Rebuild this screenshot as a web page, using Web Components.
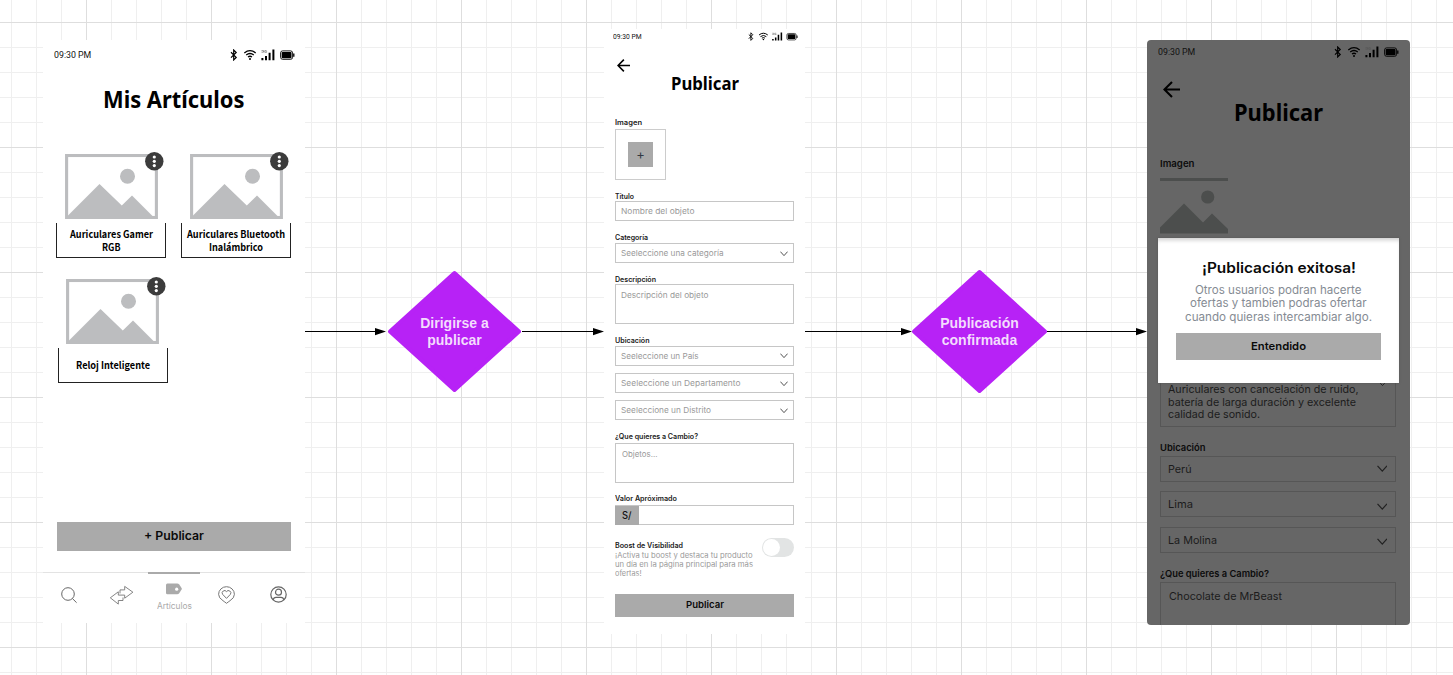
<!DOCTYPE html>
<html lang="es">
<head>
<meta charset="utf-8">
<title>Flujo de publicación</title>
<style>
html,body{margin:0;height:100%;overflow:hidden;background:#fff}
body{font-family:Inter,"Liberation Sans",sans-serif}
</style>
</head>
<body>
<flow-canvas>
  <articles-screen style="left:43px;top:40px"></articles-screen>
  <flow-arrow len="81" style="left:305px;top:326px"></flow-arrow>
  <decision-node w="135" h="123" style="left:387px;top:270px"><span>Dirigirse a<br>publicar</span></decision-node>
  <flow-arrow len="82" style="left:522px;top:326px"></flow-arrow>
  <publish-screen style="left:604px;top:29px"></publish-screen>
  <flow-arrow len="107" style="left:805px;top:326px"></flow-arrow>
  <decision-node w="137" h="125" style="left:911px;top:269px"><span>Publicación<br>confirmada</span></decision-node>
  <flow-arrow len="100" style="left:1047px;top:326px"></flow-arrow>
  <success-screen style="left:1147px;top:40px"></success-screen>
</flow-canvas>

<script>
function define(name, render, after) {
  customElements.define(name, class extends HTMLElement {
    connectedCallback() {
      if (this.shadowRoot) return;
      const t = document.createElement('template');
      t.innerHTML = render(this);
      this.attachShadow({mode: 'open'}).append(t.content.cloneNode(true));
      if (after) after(this);
    }
  });
}
const a = (el, n, d = '') => el.getAttribute(n) ?? d;

define('flow-canvas', () => `<style>
:host{display:block;position:relative;width:1453px;height:675px;overflow:hidden;
background:
linear-gradient(90deg,#dedede 1px,transparent 1px) 86px 0/125px 125px,
linear-gradient(#dedede 1px,transparent 1px) 0 22px/125px 125px,
linear-gradient(90deg,#efefef 1px,transparent 1px) 11px 0/25px 25px,
linear-gradient(#efefef 1px,transparent 1px) 0 22px/25px 25px,#fff}
::slotted(*){position:absolute}
</style><slot></slot>`);

define('flow-arrow', el => { const n = +a(el, 'len'); return `<style>:host{display:block;width:${n}px;height:11px}svg{display:block}</style>
<svg width="${n}" height="11"><path d="M0 5.5H${n-9}" stroke="#000" stroke-width="1.2"/><path d="M${n-11} 2L${n} 5.6L${n-11} 9.2Z"/></svg>`; });

define('decision-node', el => { const w = +a(el,'w'), h = +a(el,'h'); return `<style>
:host{display:grid;width:${w}px;height:${h}px;place-items:center;text-align:center;color:#f3dcfd;font:bold 14px/16.7px "Liberation Sans",Arial,sans-serif}
svg,.t{grid-area:1/1}</style>
<svg width="${w}" height="${h}"><path d="M${w/2} 3L${w-3} ${h/2}L${w/2} ${h-3}L3 ${h/2}Z" fill="#b722f6" stroke="#b722f6" stroke-width="4" stroke-linejoin="round"/></svg><div class="t"><slot></slot></div>`; });

define('status-bar', () => `<style>
:host{display:flex;align-items:center;justify-content:space-between;box-sizing:border-box;color:#111;font-family:Roboto,sans-serif}
svg{display:block;width:var(--iw,65px)}
</style><slot></slot>
<svg viewBox="0 0 65 12" fill="none" stroke="#000">
<path d="M1 3.3L6.2 8.4L3.7 10.9V1L6.2 3.5L1 8.7" stroke-width="1.2"/>
<path d="M14.3 3.9Q20 -.7 25.7 3.9M16.2 6Q20 3 23.8 6M18 8Q20 6.5 22 8" stroke-width="1.3"/><circle cx="20" cy="9.9" r="1" fill="#000" stroke="none"/>
<path d="M32.4 9v2.2M36 7v4.2M39.6 3.7v7.5M43.4 .6v10.6" stroke-width="2"/>
<path d="M31.5 1.6h2v1.6h-2M34.8 1.6h1.8M34.8 1.6v1.7h1.8v-1" stroke="#555" stroke-width=".6"/>
<rect x="50.6" y="1.9" width="12" height="8.4" rx="2" stroke-width=".9"/><rect x="51.7" y="3" width="9.8" height="6.2" rx=".8" fill="#000" stroke="none"/><path d="M63.8 4.6v3.2" stroke-width="1.3"/>
</svg>`);

define('back-arrow', () => `<style>:host{display:block;width:var(--s);height:var(--s)}svg{display:block;width:100%;height:100%}</style>
<svg viewBox="0 0 17 17" fill="none" stroke="#000" stroke-width="2.1"><path d="M17 8.5H1.6M9 .9L1.4 8.5L9 16.1"/></svg>`);

define('picture-thumb', () => `<style>:host{display:block;width:93px;height:65px}svg{display:block}</style>
<svg width="93" height="65"><rect x="1.6" y="1.5" width="89.8" height="62" fill="#fff" stroke="#bcbdbf" stroke-width="3.1"/>
<circle cx="62.5" cy="22.2" r="7.5" fill="#bcbdbf"/><path d="M2 62.5L34.5 30L56.8 51.5L67 41.5L88 62.5V64H2Z" fill="#bcbdbf"/></svg>`);

define('item-card', el => `<style>
:host{display:flex;flex-direction:column;width:110px}
.p{position:relative;margin-left:8.6px}
.m{position:absolute;left:80.4px;top:-2px;display:block}
.b{box-sizing:border-box;height:35px;margin-top:4px;padding-bottom:1px;border:1px solid #222;border-top:0;display:flex;flex-direction:column;justify-content:center;align-items:center;font:bold 10px/13px "Noto Sans CJK SC","Noto Sans",sans-serif;color:#000}
</style><div class="p"><picture-thumb></picture-thumb>
<svg class="m" width="19" height="19"><circle cx="9.3" cy="9.3" r="9.2" fill="#3c3c3c"/><g fill="#fff"><circle cx="9.3" cy="5" r="1.6"/><circle cx="9.3" cy="9.3" r="1.6"/><circle cx="9.3" cy="13.6" r="1.6"/></g></svg></div>
<div class="b"><slot></slot></div>`);

define('nav-item', el => `<style>
:host{display:flex;flex-direction:column;align-items:center;box-sizing:border-box;width:52.5px;height:51px;padding-top:14.4px;border-top:0 solid #aaa;color:#aaa;font-size:8.6px}
:host([on]){border-top-width:2.5px;padding-top:8.5px}svg{display:block;overflow:visible}
</style>${{
search:'<svg width="18" height="18" fill="none" stroke="#666" stroke-width="1"><circle cx="8" cy="8" r="6.3"/><path d="M12.4 12.5L16.6 16.7"/></svg>',
swap:'<svg width="24" height="19" fill="none" stroke="#777" stroke-width=".9" stroke-linejoin="round"><path d="M10 7.4V3.9H14.7V.4L22.9 6.2L14.7 12.2V9.1H8.3V5.8L.3 11.8L8.3 18.1V14.5H13V11.5"/></svg>',
tag:'<svg width="16" height="12"><path d="M1.4 .5H11.2Q12.4 .5 13.2 1.6L15.6 5Q16 5.8 15.6 6.6L13.2 10.2Q12.4 11.3 11.2 11.3H1.4Q0 11.3 0 9.8V2Q0 .5 1.4 .5Z" fill="#aaa"/><circle cx="10.7" cy="6.2" r="1.6" fill="#fff"/></svg>',
heart:'<svg width="17" height="18" fill="none" stroke="#777"><path d="M8.5 17.3Q6.8 16 5 14.7Q.6 12 .6 8.3A7.9 7.6 0 0 1 16.4 8.3Q16.4 12 12 14.7Q10.2 16 8.5 17.3Z"/><path d="M8.5 12.4L4.6 8.3A2.3 2.3 0 0 1 8.5 5.6A2.3 2.3 0 0 1 12.4 8.3Z"/></svg>',
user:'<svg width="17" height="17" fill="none" stroke="#666" stroke-width="1.2"><circle cx="8.5" cy="8.5" r="7.7"/><circle cx="8.5" cy="6.2" r="3"/><path d="M3.2 13.8Q3.6 11.4 6 11.4H11Q13.4 11.4 13.8 13.8"/></svg>'
}[a(el,'icon')]}<slot></slot>`);

define('app-button', () => `<style>:host{display:flex;box-sizing:border-box;align-items:center;justify-content:center;padding-bottom:1.5px;background:#aaa;color:#0a0a0a;font-weight:600}</style><slot></slot>`);

define('form-field', el => { const h = a(el,'h','20'); return `<style>
:host{display:block;margin-top:${a(el,'mt','0')}px}
.l{font-size:var(--ls);font-weight:600;line-height:var(--lh);height:var(--lh);color:var(--lc);margin-bottom:${a(el,'gap','0')}px}
.l fit-text{position:relative;top:var(--ly,0)}
.b{box-sizing:border-box;height:${h}px;border:1px solid var(--bc);display:flex;justify-content:space-between;align-items:flex-start;padding:0 var(--pr) 0 ${a(el,'pl','4.7')}px;font-size:var(--vs);color:var(--vc)}
.v{line-height:${a(el,'vh','18')}px}
svg{display:block;width:var(--cw);margin-top:${a(el,'cy','7')}px}
</style>${el.hasAttribute('label') ? `<div class="l"><fit-text w="${a(el,'lw')}">${a(el,'label')}</fit-text></div>` : ''}
<div class="b"><div class="v">${el.hasAttribute('value') ? `<fit-text w="${a(el,'vw')}">${a(el,'value')}</fit-text>` : '<slot></slot>'}</div>
${el.hasAttribute('select') ? '<svg viewBox="0 0 10 7" fill="none" stroke="currentColor" stroke-width="1.15"><path d="M.5 .8L5 5.8L9.5 .8" style="stroke:var(--cc)"/></svg>' : ''}</div>`; });

define('articles-screen', () => `<style>
:host{display:flex;flex-direction:column;width:262px;height:583px;background:#fff}
status-bar{height:29px;padding:0 10px 0 11.3px;font-size:9px}
h1{margin:15px 0 0;height:31px;align-self:center;font:bold 22.4px/32px "Noto Sans",sans-serif}
.g{display:grid;grid-template-columns:110px 110px;gap:21px 14.6px;padding:39px 0 0 13.4px;justify-content:start}
.g :nth-child(3){margin-left:1.4px}
app-button{height:29px;margin:139px 14px 0;font-size:11.8px}
nav{display:flex;justify-content:center;margin-top:21px;border-top:1px solid #e3e3e3}
nav>*{margin-top:-1px}
</style>
<status-bar><fit-text w="37.3">09:30 PM</fit-text></status-bar>
<h1><fit-text w="141.5">Mis Artículos</fit-text></h1>
<div class="g">
<item-card><fit-text w="83">Auriculares Gamer</fit-text><fit-text w="18.5">RGB</fit-text></item-card>
<item-card><fit-text w="98">Auriculares Bluetooth</fit-text><fit-text w="54">Inalámbrico</fit-text></item-card>
<item-card><fit-text w="74">Reloj Inteligente</fit-text></item-card>
</div>
<app-button><fit-text w="60">+ Publicar</fit-text></app-button>
<nav><nav-item icon="search"></nav-item><nav-item icon="swap"></nav-item><nav-item icon="tag" on><fit-text w="35" style="line-height:12px;margin-top:5.5px">Artículos</fit-text></nav-item><nav-item icon="heart"></nav-item><nav-item icon="user"></nav-item></nav>`);

define('publish-screen', () => `<style>
:host{display:flex;flex-direction:column;box-sizing:border-box;width:201px;height:605px;padding:0 11px;background:#fff;
--ls:7.1px;--lh:10px;--ly:1px;--lc:#1a1a1a;--bc:#c6c6c6;--vs:8px;--vc:#999;--pr:5px;--cw:8px;--cc:#444}
status-bar{--iw:50px;height:15px;margin:0 -4px 0 -2px;font-size:7px}
back-arrow{--s:13px;margin:15px 0 0 1.5px}
h1{margin:0;height:24px;align-self:center;font:bold 17.3px/24px "Noto Sans",sans-serif}
.l{font-size:7.1px;font-weight:600;line-height:10px;color:#1a1a1a}
.im{box-sizing:border-box;width:51px;height:51px;border:1px solid #ccc;margin-top:1px;display:grid;place-items:center}
.im span{width:25px;height:25px;background:#aaa;color:#333a44;display:grid;place-items:center;font-size:13px;line-height:23px}
.pre{margin:0 0 0 -5.7px;width:23.5px;height:19px;background:#aaa;color:#111;font-size:10px;font-weight:500;display:grid;place-items:center}
.bo{display:flex;justify-content:space-between;margin-top:15.5px;height:54px}
.bo p{margin:0;font-size:7.4px;line-height:9.2px;color:#999}
.tg{width:32px;height:19px;margin-top:-2.6px;border-radius:10px;background:#e2e4e4;display:flex;align-items:center;padding-left:1px;box-sizing:border-box}
.tg i{width:17px;height:17px;border-radius:50%;background:#fff}
app-button{height:22.5px;margin-top:-.5px;font-size:9.3px;padding-bottom:1px}
</style>
<status-bar><fit-text w="28.5">09:30 PM</fit-text></status-bar>
<back-arrow></back-arrow>
<h1><fit-text w="68">Publicar</fit-text></h1>
<div class="l" style="margin-top:22px"><fit-text w="27">Imagen</fit-text></div>
<div class="im"><span>+</span></div>
<form-field mt="11" label="Título" lw="19" value="Nombre del objeto" vw="73.5"></form-field>
<form-field mt="11" gap="1" label="Categoría" lw="33" value="Seeleccione una categoría" vw="102.5" select></form-field>
<form-field mt="11" label="Descripción" lw="41" value="Descripción del objeto" vw="87.5" h="40" vh="20"></form-field>
<form-field mt="11" gap="1" label="Ubicación" lw="34.5" value="Seeleccione un País" vw="77.5" select cy="5.5"></form-field>
<form-field mt="7" value="Seeleccione un Departamento" vw="119.5" select></form-field>
<form-field mt="7" value="Seeleccione un Distrito" vw="90" select></form-field>
<form-field mt="11" gap="2" label="¿Que quieres a Cambio?" lw="83" value="Objetos..." vw="35.5" h="40" vh="20" pl="5.7"></form-field>
<form-field mt="10.5" gap="1" label="Valor Apróximado" lw="62" h="20.5" style="--ly:0"><div class="pre"><fit-text w="9.5">S/</fit-text></div></form-field>
<div class="bo"><div><div class="l"><fit-text w="68">Boost de Visibilidad</fit-text></div>
<p><fit-text w="137.5">¡Activa tu boost y destaca tu producto</fit-text><fit-text w="138">un día en la página principal para más</fit-text><fit-text w="26.5">ofertas!</fit-text></p></div><div class="tg"><i></i></div></div>
<app-button><fit-text w="38">Publicar</fit-text></app-button>`);

define('success-dialog', () => `<style>
:host{display:flex;flex-direction:column;align-items:center;box-sizing:border-box;background:#fff;padding-top:20px;box-shadow:inset 0 4px 4px -2px #ccc,0 0 2px #555}
h2{margin:0;font-size:14.4px;line-height:20px;font-weight:600;color:#0a0a0a}
p{margin:5.5px 0 0;display:flex;flex-direction:column;align-items:center;font-size:11.5px;line-height:13.5px;color:#858b93}
app-button{width:205px;height:27px;margin-top:9px;font-size:11px;padding-bottom:2px}
</style><h2><fit-text w="154">¡Publicación exitosa!</fit-text></h2>
<p><fit-text w="166.5">Otros usuarios podran hacerte</fit-text><fit-text w="176.5">ofertas y tambien podras ofertar</fit-text><fit-text w="187">cuando quieras intercambiar algo.</fit-text></p>
<app-button><fit-text w="55">Entendido</fit-text></app-button>`);

define('success-screen', () => `<style>
:host{display:flex;flex-direction:column;box-sizing:border-box;width:263px;height:585px;padding:0 14.5px 0 13.4px;background:#666;border-radius:4px;overflow:hidden;
--ls:9.3px;--lh:12px;--lc:#0c0c0c;--bc:#565656;--vs:10.9px;--vc:#1c1c1c;--pr:7.5px;--cw:10.5px;--cc:#222}
status-bar{height:23px;margin:0 -3.5px 0 -2px;font-size:9px;flex:none}
back-arrow{--s:17px;margin:18px 0 0 2.5px;flex:none}
h1{margin:-1px 0 0 1px;height:32px;flex:none;align-self:center;font:bold 22.6px/32px "Noto Sans",sans-serif}
.l{font-size:9.3px;font-weight:600;line-height:12px;color:#0c0c0c;margin-top:29px}
.pic{display:block;margin-top:8px;flex:none}
.de{position:relative;margin-top:132px;flex:none}
.de svg{position:absolute;right:8px;top:13.5px}
form-field{flex:none}
success-dialog{position:absolute;left:11px;top:198px;width:241px;height:144.5px}
</style>
<status-bar><fit-text w="37.3">09:30 PM</fit-text></status-bar>
<back-arrow></back-arrow>
<h1><fit-text w="89">Publicar</fit-text></h1>
<div class="l"><fit-text w="34.5">Imagen</fit-text></div>
<svg class="pic" width="68" height="56" fill="#4c4e4d"><rect width="68" height="3"/><circle cx="47.7" cy="19" r="6.6"/><path d="M0 49.5L24 25.5L43 44.5L52 35.5L68 51V55.5H0Z"/></svg>
<div class="de"><form-field h="61" pl="6.5" vh="12.5"><div style="padding-top:16px"><fit-text w="190.5">Auriculares con cancelación de ruido,</fit-text><fit-text w="188">batería de larga duración y excelente</fit-text><fit-text w="92">calidad de sonido.</fit-text></div></form-field>
<svg width="11" height="7" fill="none" stroke="#222"><path d="M.7 .5L5.5 5.5L10.3 .5"/></svg></div>
<form-field mt="15" gap="2" label="Ubicación" lw="45.5" value="Perú" vw="23.5" h="26" vh="24" pl="7" select cy="8"></form-field>
<form-field mt="9" value="Lima" vw="25" h="26" vh="25" pl="7" select cy="10.5"></form-field>
<form-field mt="10" value="La Molina" vw="49" h="26" vh="25" pl="7" select cy="10"></form-field>
<form-field mt="15" gap="2" label="¿Que quieres a Cambio?" lw="109" value="Chocolate de MrBeast" vw="113" h="60" vh="26.5" pl="7.8"></form-field>
<success-dialog></success-dialog>`);

// One line of text, stretched horizontally to the width given in the w attribute.
define('fit-text', el => `<style>:host{display:block;width:${a(el,'w')}px;white-space:nowrap}span{display:inline-block;transform-origin:0 50%;vertical-align:top}</style><span><slot></slot></span>`,
  el => { const s = el.shadowRoot.querySelector('span'), n = s.getBoundingClientRect().width; if (n) s.style.transform = `scaleX(${a(el,'w') / n})`; });
</script>
</body>
</html>
